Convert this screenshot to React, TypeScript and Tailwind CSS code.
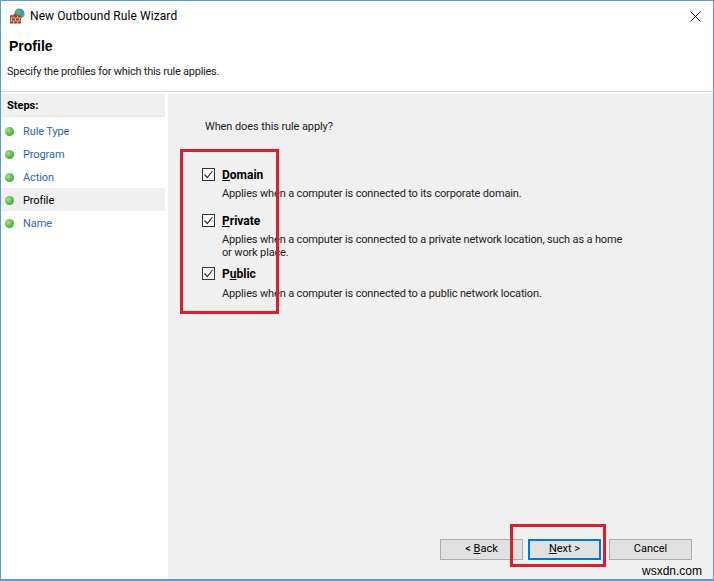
const FONT = "font-['Roboto','Liberation_Sans',Arial,sans-serif]";

const STEPS = [
  { name: "Rule Type" },
  { name: "Program" },
  { name: "Action" },
  { name: "Profile", active: true },
  { name: "Name" },
];

const OPTIONS = [
  {
    key: "D",
    rest: "omain",
    desc: ["Applies when a computer is connected to its corporate domain."],
    cls: "h-[46px]",
    descCls: "mt-[2px]",
  },
  {
    key: "P",
    rest: "rivate",
    desc: [
      "Applies when a computer is connected to a private network location, such as a home",
      "or work place.",
    ],
    cls: "h-[53px]",
    descCls: "mt-[2px]",
  },
  {
    key: "P",
    rest: "ublic",
    under: "u",
    desc: ["Applies when a computer is connected to a public network location."],
    cls: "h-[46px]",
    descCls: "mt-[3px]",
  },
];

function FirewallIcon() {
  return (
    <svg width="16" height="16" viewBox="0 0 16 16">
      <circle cx="10.500" cy="5.500" r="5" fill="#3f8fd0" />
      <path d="M7.500 2c2-1.500 4 0 4.500 1.500s-1 3-3 2.500S6 3.500 7.500 2z" fill="#5fb548" />
      <path d="M12.500 6.500c1.500-.5 3 0 3 1s-1.500 2-2.500 1.500z" fill="#5fb548" />
      <path d="M1 7.500 6 6l6 2v7.500H1z" fill="#9c3f2c" />
      <path d="M1 10h11M1 13h11M4 7v3M8.500 7.500V10M2.500 10v3M6.500 10v3M10.500 10v3M4.500 13v3M8.500 13v3" stroke="#dfbcaa" strokeWidth="0.8" fill="none" />
    </svg>
  );
}

function GreenDot() {
  return <span className="mt-[1px] h-[9px] w-[9px] rounded-full bg-[radial-gradient(circle_at_35%_35%,#a8e28e,#4caf3c_65%,#3c8f30)]" />;
}

function CheckBox() {
  return (
    <span className="flex h-[13px] w-[13px] shrink-0 items-center justify-center border border-[#333333] bg-white">
      <svg width="11" height="11" viewBox="0 0 11 11" fill="none">
        <path d="M1.500 5.500 4.300 8.500 9.500 2" stroke="#333333" strokeWidth="1.200" />
      </svg>
    </span>
  );
}

function WizardButton({ children, primary }: { children: React.ReactNode; primary?: boolean }) {
  return (
    <button
      className={
        primary
          ? "h-[21px] w-[73px] border-2 border-[#0078d7] bg-[#e1e1e1] text-[11px] text-black"
          : "h-[21px] w-[83px] border border-[#adadad] bg-[#e1e1e1] text-[11px] text-black"
      }
    >
      {children}
    </button>
  );
}

export default function App() {
  return (
    <div className={`${FONT} relative flex h-[581px] w-[714px] flex-col border border-b-2 border-[#5b9bd5] bg-white text-black`}>
      {/* Title bar */}
      <div className="flex h-[30px] shrink-0 items-center pr-[12px] pl-[8px]">
        <FirewallIcon />
        <span className="ml-[5px] text-xs tracking-[0.08px]">New Outbound Rule Wizard</span>
        <svg className="ml-auto" width="11" height="11" viewBox="0 0 11 11">
          <path d="M.5.500l10 10M10.500.500l-10 10" stroke="#111" fill="none" />
        </svg>
      </div>

      {/* Header */}
      <div className="h-[61px] shrink-0 border-b border-[#dcdcdc] pl-[6px]">
        <div className="mt-[6px] pl-[2px] font-['Liberation_Sans',Arial,sans-serif] text-sm leading-[18px] font-bold">Profile</div>
        <div className="mt-[10px] text-[11px] leading-[14px] tracking-[-0.25px] text-[#222222]">Specify the profiles for which this rule applies.</div>
      </div>

      <div className="flex min-h-0 flex-1 pt-[2px]">
        {/* Steps */}
        <div className="w-[164px] shrink-0">
          <div className="flex h-[23px] items-center border-b border-[#e6e6e6] bg-[#f0f0f0] pt-[2px] pl-[6px] text-[11px] font-bold">Steps:</div>
          <div className="mt-[2px]">
            {STEPS.map((s) => (
              <div
                key={s.name}
                className={`flex h-[23px] items-center pl-[4px] text-[11px] tracking-[-0.1px] ${s.active ? "bg-[#f0f0f0] text-black" : "text-[#2b66b5]"}`}
              >
                <GreenDot />
                <span className="mt-[3px] ml-[9px]">{s.name}</span>
              </div>
            ))}
          </div>
        </div>

        {/* Main panel */}
        <div className="ml-[3px] flex min-w-0 flex-1 flex-col bg-[#f0f0f0]">
          <div className="mt-[26px] pl-[37px] text-[11px] leading-[14px] tracking-[-0.1px] text-[#222222]">When does this rule apply?</div>
          <div className="mt-[30px] pl-[34px]">
            {OPTIONS.map((o) => (
              <div key={o.rest} className={o.cls}>
                <div className="flex h-[21px] items-center">
                  <CheckBox />
                  <span className="ml-[7px] text-[12px] font-bold">
                    {o.under ? (
                      <>
                        {o.key}
                        <span className="underline">{o.under}</span>
                        {o.rest.slice(1)}
                      </>
                    ) : (
                      <>
                        <span className="underline">{o.key}</span>
                        {o.rest}
                      </>
                    )}
                  </span>
                </div>
                <div className={`${o.descCls} pl-[20px] text-[11px] leading-[13px] tracking-[-0.15px] text-[#222222]`}>
                  {o.desc.map((d) => (
                    <div key={d}>{d}</div>
                  ))}
                </div>
              </div>
            ))}
          </div>
          <div className="mt-auto mb-[19px] flex items-center pl-[272px]">
            <WizardButton>
              &lt; <span className="underline">B</span>ack
            </WizardButton>
            <span className="ml-[5px]" />
            <WizardButton primary>
              <span className="underline">N</span>ext &gt;
            </WizardButton>
            <span className="ml-[8px]" />
            <WizardButton>Cancel</WizardButton>
          </div>
        </div>
      </div>

      {/* Red annotation boxes */}
      <div className="absolute top-[148px] left-[179px] h-[165px] w-[99px] border-[3px] border-[#d9202c]" />
      <div className="absolute top-[523px] left-[509px] h-[43px] w-[96px] border-[3px] border-[#d9202c]" />
      <div className="absolute right-[11px] bottom-[0px] font-['Liberation_Sans',Arial,sans-serif] text-xs">wsxdn.com</div>
    </div>
  );
}
